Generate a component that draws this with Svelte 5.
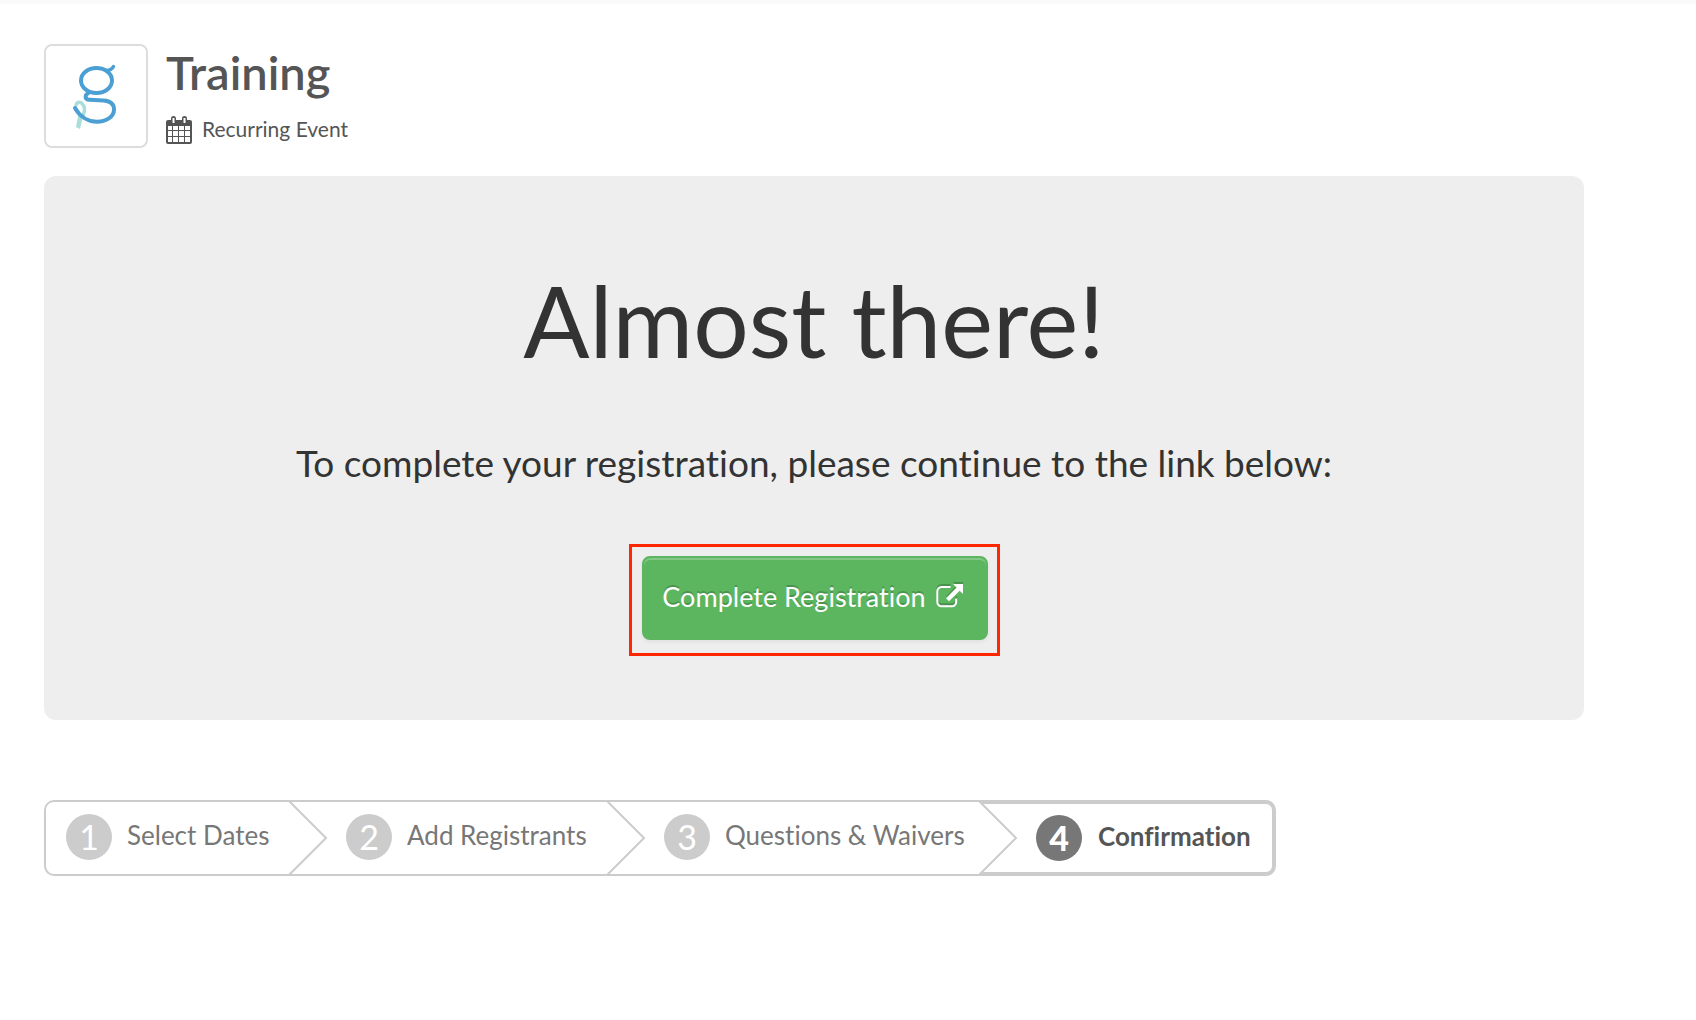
<script>
  const steps = [
    { label: 'Select Dates' },
    { label: 'Add Registrants' },
    { label: 'Questions & Waivers' },
    { label: 'Confirmation', current: true }
  ];
</script>

<div class="page">
  <header class="event">
    <a class="logo" href="#home" aria-label="Organization home">
      <svg viewBox="0 0 70 90" width="70" height="90" fill="none" stroke-linecap="round" aria-hidden="true">
        <path d="M19 78l-4-2 2.500-13.500 5 0.500z" fill="#a9deda" />
        <path d="M15 54c0.500-2.500 3-3.500 5.500-2 3.500 3 3.500 8 1.500 12.500" stroke="#a9deda" stroke-width="3.500" />
        <path d="M14.500 55.500c1.500 5 4 8 6.500 11" stroke="#a9deda" stroke-width="2" />
        <ellipse cx="35.500" cy="29.500" rx="15.500" ry="12.500" stroke="#4c9fd3" stroke-width="4" />
        <path d="M45 19.500C49.500 19.500 51.500 17.500 52.500 15.500" stroke="#4c9fd3" stroke-width="3.500" />
        <path d="M27.500 42c-4 2-4 6.500 1 6.800l14 0.800c7 0.500 10.500 3.500 10.500 8.900 0 7.500-8 12.300-17 12.300C26.500 70.800 18.500 65 14 57" stroke="#4c9fd3" stroke-width="4" />
      </svg>
    </a>
    <div class="summary">
      <h1>Training</h1>
      <p class="schedule">
        <svg viewBox="0 0 26 28" width="26" height="28" aria-hidden="true">
          <path fill="#555" fill-rule="evenodd" d="M2 4h3V2.500C5 1 5.800 0 7.500 0S10 1 10 2.500V4h6V2.500C16 1 16.800 0 18.500 0S21 1 21 2.500V4h3a2 2 0 0 1 2 2v20a2 2 0 0 1-2 2H2a2 2 0 0 1-2-2V6a2 2 0 0 1 2-2zM2 10v4h4v-4zM7 10v4h5v-4zM13 10v4h5v-4zM19 10v4h5v-4zM2 15v5h4v-5zM7 15v5h5v-5zM13 15v5h5v-5zM19 15v5h5v-5zM2 21v5h4v-5zM7 21v5h5v-5zM13 21v5h5v-5zM19 21v5h5v-5zM6.500 2v5h2V2zM17.500 2v5h2V2z" />
        </svg>
        <span>Recurring Event</span>
      </p>
    </div>
  </header>

  <main class="panel">
    <h2>Almost there!</h2>
    <p class="lead">To complete your registration, please continue to the link below:</p>
    <div class="highlight">
      <a class="action" href="#complete">
        <span>Complete Registration</span>
        <svg viewBox="0 0 27 24" width="27" height="24" fill="none" aria-hidden="true">
          <path d="M14.500 3H5.500A4.200 4.200 0 0 0 1.300 7.200V18a4.200 4.200 0 0 0 4.200 4.200H16A4.200 4.200 0 0 0 20.200 18V14.500" stroke="#fff" stroke-width="2" />
          <path d="M17 0H27V10L23.700 6.800 13 17.300 10 14.300 20.500 3.500z" fill="#fff" />
        </svg>
      </a>
    </div>
  </main>

  <ol class="steps">
    {#each steps as step, i}
      <li class:current={step.current} aria-current={step.current ? 'step' : undefined}>
        <span class="number">{i + 1}</span>
        <span class="label">{step.label}</span>
        {#if i < steps.length - 1}
          <svg class="chevron" viewBox="0 0 40 76" width="40" height="76" aria-hidden="true">
            <path d="M0 2H1.500L38 38 1.500 74H0z" fill="#fff" />
            <path d="M1 1L38 38 1 75" fill="none" stroke="#ccc" stroke-width="2" />
          </svg>
        {/if}
      </li>
    {/each}
  </ol>
</div>

<style>
  :global(body) {
    margin: 0;
    background: #fff;
  }
  .page {
    box-sizing: border-box;
    border-top: 4px solid #fafafa;
    padding: 40px 112px 40px 44px;
    font-family: Lato, "Open Sans", sans-serif;
    font-variant-ligatures: none;
    color: #555;
  }
  h1, h2, p, ol {
    margin: 0;
    padding: 0;
  }
  .event {
    display: flex;
    gap: 18px;
    margin-bottom: 28px;
  }
  .logo {
    display: flex;
    box-sizing: border-box;
    width: 104px;
    height: 104px;
    align-items: center;
    justify-content: center;
    border: 2px solid #ddd;
    border-radius: 8px;
  }
  h1 {
    font-size: 47px;
    line-height: 56px;
    font-weight: 600;
  }
  .schedule {
    display: flex;
    align-items: center;
    gap: 10px;
    margin-top: 15px;
    font-size: 21px;
    line-height: 28px;
  }
  .schedule span {
    padding-bottom: 2px;
  }
  .panel {
    display: flex;
    flex-direction: column;
    align-items: center;
    padding: 84px 20px 64px;
    border-radius: 12px;
    background: #eee;
    color: #333;
    text-align: center;
  }
  h2 {
    font-size: 98px;
    line-height: 120px;
    font-weight: 400;
  }
  .lead {
    margin-top: 59px;
    font-size: 37px;
    line-height: 48px;
  }
  .highlight {
    margin-top: 57px;
    border: 3px solid #ff2600;
    padding: 9px 9px 13px 10px;
  }
  .action {
    display: flex;
    box-sizing: border-box;
    min-width: 346px;
    height: 84px;
    align-items: center;
    justify-content: center;
    gap: 10px;
    padding: 0 22px 4px 18px;
    border: 2px solid #5cb660;
    border-radius: 8px;
    background: #5cb660;
    box-shadow: inset 0 2px 0 #84c887, 0 2px 4px rgba(0, 0, 0, 0.06);
    color: #fff;
    font-size: 27px;
    text-decoration: none;
    text-shadow: 0 -2px 0 rgba(0, 0, 0, 0.2);
  }
  .action svg {
    filter: drop-shadow(0 -2px 0 rgba(0, 0, 0, 0.2));
  }
  .steps {
    display: grid;
    grid-template-columns: 244fr 318fr 372fr 298fr;
    width: 80%;
    margin-top: 80px;
    list-style: none;
    color: #777;
    font-size: 26px;
  }
  li {
    position: relative;
    display: flex;
    box-sizing: border-box;
    height: 76px;
    align-items: center;
    gap: 15px;
    padding: 0 0 2px 58px;
    border: 2px solid #ccc;
    border-width: 2px 0;
    line-height: 46px;
    white-space: nowrap;
  }
  li:first-child {
    padding-left: 20px;
    border-left-width: 2px;
    border-radius: 10px 0 0 10px;
  }
  .number {
    width: 46px;
    border-radius: 50%;
    background: #ccc;
    color: #fff;
    font-size: 34px;
    text-align: center;
  }
  .label {
    padding-bottom: 4px;
  }
  .chevron {
    position: absolute;
    z-index: 1;
    top: -2px;
    left: 100%;
  }
  .current {
    gap: 16px;
    padding-bottom: 0;
    border-width: 4px 4px 4px 0;
    border-radius: 0 10px 10px 0;
    color: #555;
    font-weight: 700;
  }
  .current .number {
    background: #777;
    font-weight: 900;
  }
</style>
